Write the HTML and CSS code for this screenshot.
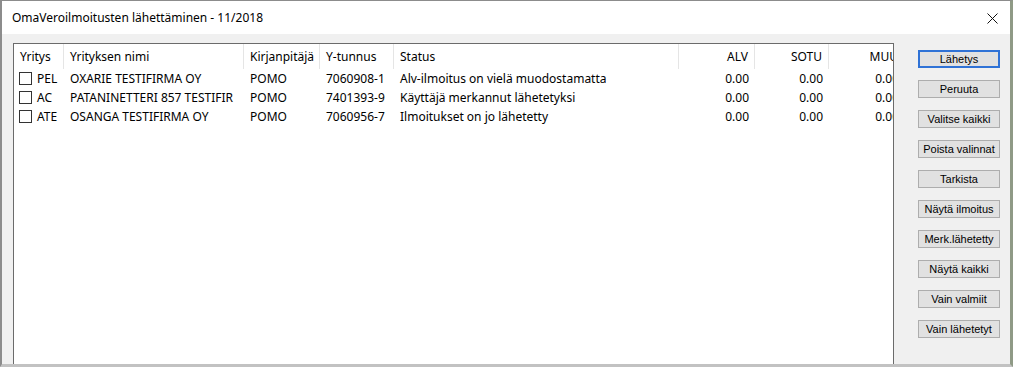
FILE: index.html
```html
<!DOCTYPE html>
<html lang="fi">
<head>
<meta charset="utf-8">
<title>OmaVeroilmoitusten lähettäminen</title>
<link rel="stylesheet" href="styles.css">
</head>
<body>
<div class="window">
  <div class="titlebar">
    <span class="title">OmaVeroilmoitusten lähettäminen - 11/2018</span>
    <svg class="close" width="11" height="11" viewBox="0 0 11 11"><path d="M0.5 0.5 L10.5 10.5 M10.5 0.5 L0.5 10.5" stroke="#111" stroke-width="1" fill="none"/></svg>
  </div>
  <div class="content">
    <div class="listbox">
      <div class="grid header">
        <div class="hc">Yritys</div>
        <div class="hc">Yrityksen nimi</div>
        <div class="hc">Kirjanpitäjä</div>
        <div class="hc">Y-tunnus</div>
        <div class="hc">Status</div>
        <div class="hc num">ALV</div>
        <div class="hc num">SOTU</div>
        <div class="hc num">MUU</div>
      </div>
      <div class="grid row">
        <div class="c code"><span class="cb"></span>PEL</div>
        <div class="c">OXARIE TESTIFIRMA OY</div>
        <div class="c">POMO</div>
        <div class="c">7060908-1</div>
        <div class="c">Alv-ilmoitus on vielä muodostamatta</div>
        <div class="c num">0.00</div>
        <div class="c num">0.00</div>
        <div class="c num">0.00</div>
      </div>
      <div class="grid row">
        <div class="c code"><span class="cb"></span>AC</div>
        <div class="c">PATANINETTERI 857 TESTIFIR</div>
        <div class="c">POMO</div>
        <div class="c">7401393-9</div>
        <div class="c">Käyttäjä merkannut lähetetyksi</div>
        <div class="c num">0.00</div>
        <div class="c num">0.00</div>
        <div class="c num">0.00</div>
      </div>
      <div class="grid row">
        <div class="c code"><span class="cb"></span>ATE</div>
        <div class="c">OSANGA TESTIFIRMA OY</div>
        <div class="c">POMO</div>
        <div class="c">7060956-7</div>
        <div class="c">Ilmoitukset on jo lähetetty</div>
        <div class="c num">0.00</div>
        <div class="c num">0.00</div>
        <div class="c num">0.00</div>
      </div>
    </div>
    <div class="buttons">
      <button class="btn default">Lähetys</button>
      <button class="btn">Peruuta</button>
      <button class="btn">Valitse kaikki</button>
      <button class="btn">Poista valinnat</button>
      <button class="btn">Tarkista</button>
      <button class="btn">Näytä ilmoitus</button>
      <button class="btn">Merk.lähetetty</button>
      <button class="btn">Näytä kaikki</button>
      <button class="btn">Vain valmiit</button>
      <button class="btn">Vain lähetetyt</button>
    </div>
  </div>
</div>
</body>
</html>
```

FILE: styles.css
```css
html, body {
  margin: 0;
  padding: 0;
}
body {
  width: 1013px;
  height: 367px;
  overflow: hidden;
  background: #c4c4c4;
  font-family: "Noto Sans", "DejaVu Sans", sans-serif;
  font-size: 12px;
  color: #000;
}
.window {
  box-sizing: border-box;
  width: 1013px;
  height: 367px;
  border-left: 2px solid #8c8c8c;
  border-top: 1px solid #8c8c8c;
  border-right: 3px solid #8f9a86;
  border-bottom: 3px solid #c2c2c2;
  display: flex;
  flex-direction: column;
  background: #f0f0f0;
}
.titlebar {
  height: 33px;
  flex: none;
  background: #fff;
  display: flex;
  justify-content: space-between;
  align-items: flex-start;
}
.title {
  padding: 9px 0 0 10px;
  line-height: 16px;
  font-size: 12px;
}
.close {
  margin: 12px 12px 0 0;
  display: block;
}
.content {
  flex: 1;
  display: flex;
  align-items: stretch;
  padding: 9px 0 0 11px;
  min-height: 0;
}
.listbox {
  width: 881px;
  box-sizing: border-box;
  border: 1px solid #6b6b6b;
  border-bottom: none;
  background: #fff;
  overflow: hidden;
  flex: none;
}
.grid {
  display: grid;
  grid-template-columns: 50px 180px 76px 74px 285px 76px 74px 76px;
  width: max-content;
}
.header {
  height: 25px;
}
.hc {
  box-sizing: border-box;
  border-right: 1px solid #e5e5e5;
  padding-left: 6px;
  line-height: 25px;
  white-space: nowrap;
  overflow: hidden;
}
.row {
  height: 19px;
}
.c {
  padding-left: 6px;
  line-height: 19px;
  white-space: nowrap;
  overflow: hidden;
  display: flex;
  align-items: center;
}
.c.code {
  padding-left: 5px;
}
.cb {
  box-sizing: border-box;
  width: 13px;
  height: 13px;
  border: 1px solid #333;
  background: #fff;
  margin-right: 5px;
  flex: none;
}
.num {
  padding-left: 0;
  padding-right: 6px;
  text-align: right;
  justify-content: flex-end;
}
.hc.num {
  padding-right: 6px;
}
.buttons {
  margin-left: 24px;
  padding-top: 7px;
  display: flex;
  flex-direction: column;
  gap: 12px;
}
.btn {
  box-sizing: border-box;
  width: 82px;
  height: 18px;
  padding: 0;
  margin: 0;
  background: #e1e1e1;
  border: 1px solid #adadad;
  font-family: "Liberation Sans", Arial, sans-serif;
  font-size: 11px;
  color: #000;
  line-height: 16px;
  text-align: center;
  white-space: nowrap;
}
.btn.default {
  border: 2px solid #2f72d6;
  line-height: 14px;
}
```
